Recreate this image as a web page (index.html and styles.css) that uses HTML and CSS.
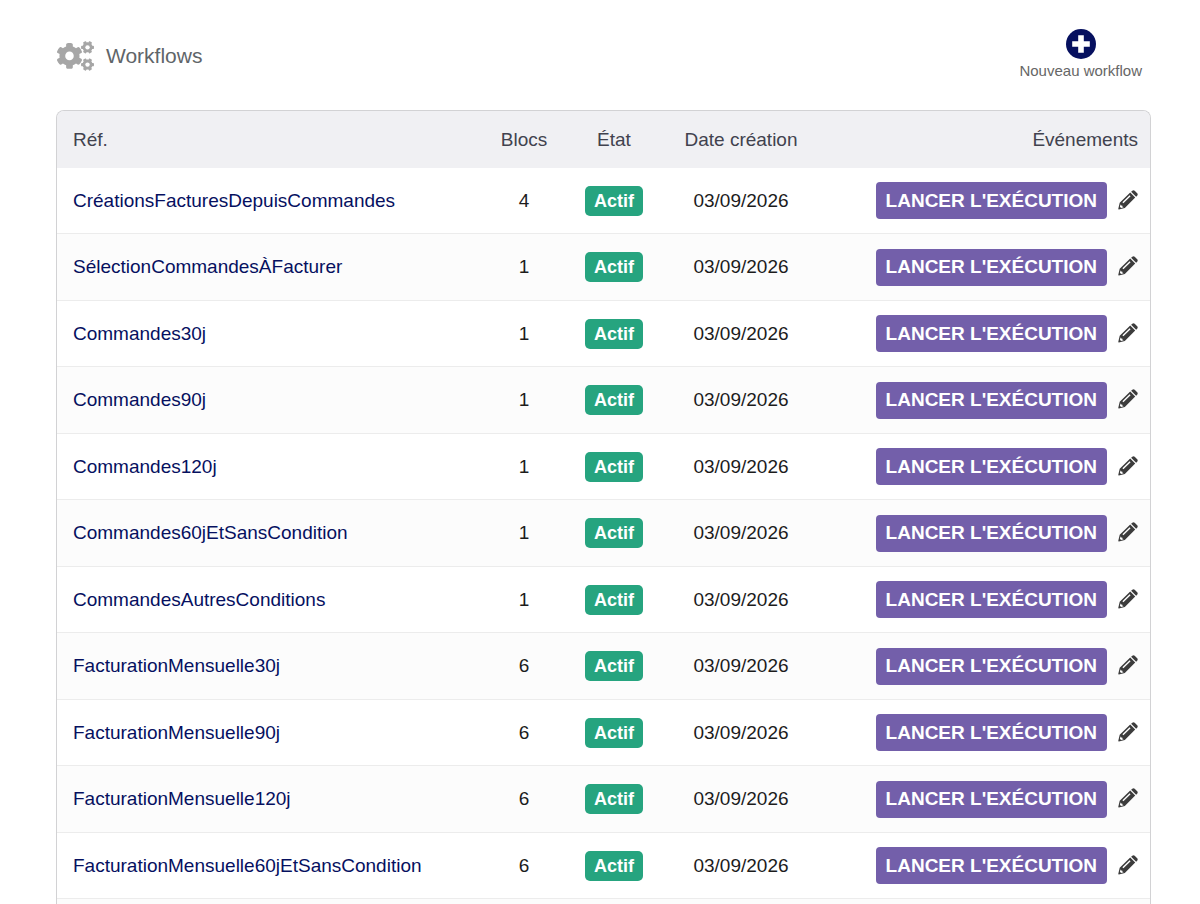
FILE: index.html
```html
<!DOCTYPE html>
<html lang="fr">
<head>
<meta charset="utf-8">
<title>Workflows</title>
<link rel="stylesheet" href="styles.css">
</head>
<body>
<svg class="sprite" aria-hidden="true">
  <symbol id="pencil" viewBox="0 0 20 20">
    <path fill-rule="evenodd" d="M1.7 12.8L12.2 2.6l5 5L6.8 17.9.9 19.5q-.8 0-.6-.8zM4.4 12.2l1 1L12.6 6.2l-1-1zM2.6 14.2l-.7 2.6 1.2 1.2 2.6-.8-1.2-.4-.3-1.2-1.2-.2z"/>
    <path d="M13.1 1.8l1.2-1.1q1.2-.9 2.4.1l2.5 2.5q1 1.2 0 2.4l-1.1 1.1z"/>
  </symbol>
</svg>
<header class="page-header">
  <h1 class="title">
    <svg class="title-icon" viewBox="0 0 640 512" aria-hidden="true">
      <path id="small-gear" d="M512.1 191l-8.2 14.3c-3 5.3-9.4 7.5-15.1 5.4-11.8-4.4-22.6-10.7-32.1-18.6-4.6-3.8-5.8-10.5-2.8-15.7l8.2-14.3c-6.9-8-12.3-17.3-15.9-27.4h-16.5c-6 0-11.2-4.3-12.2-10.3-2-12-2.1-24.6 0-37.1 1-6 6.2-10.4 12.2-10.4h16.5c3.6-10.1 9-19.4 15.9-27.4l-8.2-14.3c-3-5.2-1.9-11.9 2.8-15.7 9.5-7.9 20.4-14.2 32.1-18.6 5.7-2.1 12.1.1 15.1 5.4l8.2 14.3c10.5-1.9 21.2-1.9 31.7 0L552 6.3c3-5.3 9.4-7.5 15.1-5.4 11.8 4.4 22.6 10.7 32.1 18.6 4.6 3.8 5.8 10.5 2.8 15.7l-8.2 14.3c6.9 8 12.3 17.3 15.9 27.4h16.5c6 0 11.2 4.3 12.2 10.3 2 12 2.1 24.6 0 37.1-1 6-6.2 10.4-12.2 10.4h-16.5c-3.6 10.1-9 19.4-15.9 27.4l8.2 14.3c3 5.2 1.9 11.9-2.8 15.7-9.5 7.9-20.4 14.2-32.1 18.6-5.7 2.1-12.1-.1-15.1-5.4l-8.2-14.3c-10.4 1.9-21.2 1.9-31.7 0z"/>
      <use href="#small-gear" y="299"/>
      <path d="M386.3 286.1l33.7 16.8c10.1 5.8 14.5 18.1 10.5 29.1-8.9 24.2-26.4 46.4-42.6 65.8-7.4 8.9-20.2 11.1-30.3 5.3l-29.1-16.8c-16 13.7-34.6 24.6-54.9 31.7v33.6c0 11.6-8.3 21.6-19.7 23.6-24.6 4.2-50.4 4.4-75.9 0-11.5-2-20-11.9-20-23.6V418c-20.3-7.2-38.9-18-54.9-31.7L74 403c-10 5.8-22.9 3.6-30.3-5.3-16.2-19.4-33.3-41.6-42.2-65.7-4-10.9.4-23.2 10.5-29.1l33.3-16.8c-3.9-20.9-3.9-42.4 0-63.4L12 205.8c-10.1-5.8-14.6-18.1-10.5-29 8.9-24.2 26-46.4 42.2-65.8 7.4-8.9 20.2-11.1 30.3-5.3l29.1 16.8c16-13.7 34.6-24.6 54.9-31.7V57.1c0-11.5 8.2-21.5 19.6-23.5 24.6-4.2 50.5-4.4 76-.1 11.5 2 20 11.9 20 23.6v33.6c20.3 7.2 38.9 18 54.9 31.7l29.1-16.8c10-5.8 22.9-3.6 30.3 5.3 16.2 19.4 33.2 41.6 42.1 65.8 4 10.9.1 23.2-10 29.1l-33.7 16.8c3.9 21 3.9 42.5 0 63.5z"/>
      <circle class="gear-hole" cx="216" cy="254" r="74"/>
      <circle class="gear-hole" cx="528" cy="106" r="38"/>
      <circle class="gear-hole" cx="528" cy="405" r="38"/>
    </svg>
    Workflows
  </h1>
  <a class="new-link" href="#">
    <svg class="new-icon" viewBox="0 0 30 30" aria-hidden="true">
      <circle class="new-disc" cx="15" cy="15" r="15"/>
      <path class="new-plus" d="M12.2 6.3h5.6v5.9h6v5.6h-6v5.9h-5.6v-5.9h-6v-5.6h6z"/>
    </svg>
    Nouveau workflow
  </a>
</header>
<main class="card">
  <table class="workflows">
    <thead>
      <tr>
        <th class="ref">Réf.</th>
        <th class="blocks">Blocs</th>
        <th class="state">État</th>
        <th class="date">Date création</th>
        <th class="events">Événements</th>
      </tr>
    </thead>
    <tbody id="rows"></tbody>
  </table>
</main>
<script src="rows.js"></script>
</body>
</html>
```
FILE: rows.js
```js
const workflows = [
  ["CréationsFacturesDepuisCommandes", 4],
  ["SélectionCommandesÀFacturer", 1],
  ["Commandes30j", 1],
  ["Commandes90j", 1],
  ["Commandes120j", 1],
  ["Commandes60jEtSansCondition", 1],
  ["CommandesAutresConditions", 1],
  ["FacturationMensuelle30j", 6],
  ["FacturationMensuelle90j", 6],
  ["FacturationMensuelle120j", 6],
  ["FacturationMensuelle60jEtSansCondition", 6]
];

document.getElementById("rows").innerHTML = workflows.map(([name, blocks]) => `
  <tr>
    <td class="ref"><a href="#">${name}</a></td>
    <td class="blocks">${blocks}</td>
    <td class="state"><span class="badge">Actif</span></td>
    <td class="date">03/09/2026</td>
    <td class="events">
      <div class="actions">
        <button type="button" class="run">LANCER L'EXÉCUTION</button>
        <button type="button" class="edit" aria-label="Modifier ${name}"><svg class="edit-icon"><use href="#pencil"/></svg></button>
      </div>
    </td>
  </tr>`).join("");
```
FILE: styles.css
```css
* {
  box-sizing: border-box;
}

body {
  display: flex;
  flex-direction: column;
  height: 100vh;
  margin: 0;
  padding: 0 49px 0 56px;
  overflow: hidden;
  background: #fff;
  color: #1c1c1c;
  font-family: "Liberation Sans", Arial, sans-serif;
  font-size: 19px;
}

.sprite {
  position: absolute;
  width: 0;
  height: 0;
}

.page-header {
  display: flex;
  flex: none;
  align-items: flex-start;
  justify-content: space-between;
  height: 110px;
  padding: 29px 9px 0 1px;
}

.title {
  display: flex;
  align-items: center;
  gap: 12px;
  margin: 0;
  padding-top: 12px;
  color: #5f6569;
  font-size: 21px;
  font-weight: 400;
  line-height: 30px;
}

.title-icon {
  width: 37px;
  height: 30px;
  fill: #a6a6a6;
}

.gear-hole {
  fill: #fff;
}

.new-link {
  display: flex;
  flex-direction: column;
  align-items: center;
  gap: 3px;
  color: #666;
  font-size: 15px;
  text-decoration: none;
}

.new-icon {
  width: 30px;
  height: 30px;
}

.new-disc {
  fill: #06105f;
}

.new-plus {
  fill: #fff;
}

.card {
  flex: 1;
  overflow: hidden;
  border: 1px solid #d2d2d4;
  border-bottom: 0;
  border-radius: 8px 8px 0 0;
  background: #fcfcfc;
}

.workflows {
  width: 100%;
  border-collapse: separate;
  border-spacing: 0;
  table-layout: fixed;
}

th,
td {
  padding: 0;
  text-align: center;
  vertical-align: middle;
}

th {
  height: 57px;
  background: #f0f0f3;
  color: #41424e;
  font-weight: 400;
}

td {
  height: 66px;
  border-bottom: 1px solid #ececec;
  background: #fff;
}

tbody tr:nth-child(even) td {
  height: 67px;
  background: #fcfcfc;
}

.ref {
  padding-left: 16px;
  text-align: left;
}

.ref a {
  color: #06105f;
  text-decoration: none;
}

.blocks,
.state {
  width: 90px;
}

.date {
  width: 164px;
}

.events {
  width: 327px;
  padding-right: 12px;
  text-align: right;
}

.badge {
  display: inline-block;
  padding: 0 9px;
  border-radius: 5px;
  background: #26a47f;
  color: #fff;
  font-size: 18px;
  font-weight: 700;
  line-height: 30px;
}

.actions {
  display: flex;
  align-items: center;
  justify-content: flex-end;
  gap: 11px;
}

.run {
  height: 37px;
  padding: 0 10px;
  border: 0;
  border-radius: 4px;
  background: #735faa;
  color: #fff;
  font: inherit;
  font-weight: 700;
}

.edit {
  display: flex;
  padding: 0 0 2px;
  border: 0;
  background: none;
}

.edit-icon {
  width: 20px;
  height: 20px;
  fill: #3c3c3c;
}
```
